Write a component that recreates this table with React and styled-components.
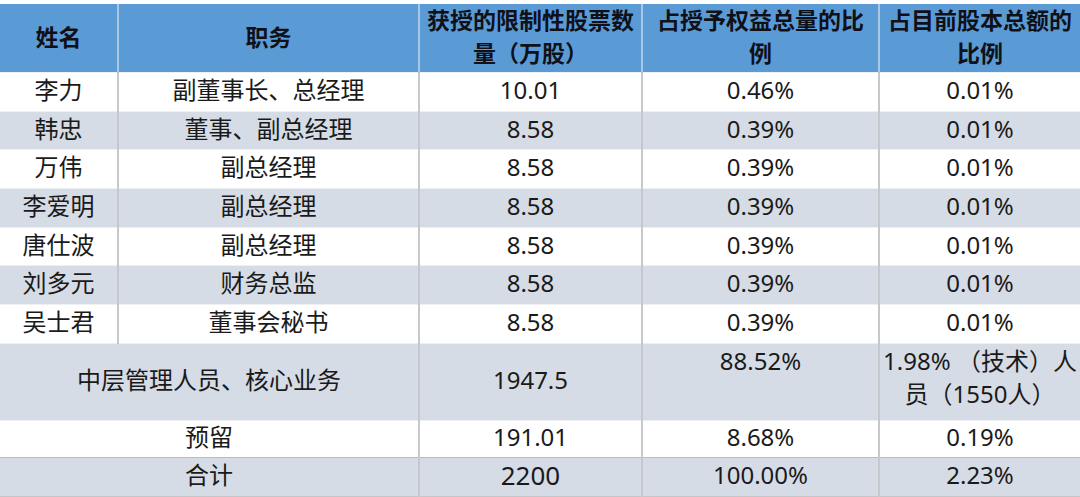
import React from "react";
import styled, { createGlobalStyle } from "styled-components";

const GlobalStyle = createGlobalStyle`
    body {
        margin: 0;
        padding-top: 4px;
        background: #fdfdfd;
        font-family: "Noto Sans", "Noto Sans CJK SC", sans-serif;
    }
`;

const Table = styled.table`
    width: 1080px;
    table-layout: fixed;
    border-collapse: collapse;
    color: #1a1a1a;
    font-size: 24px;
    text-align: center;
`;

const HeadCell = styled.th`
    height: 66px;
    padding: 0 0 2px;
    background: #5b9bd5;
    color: #101018;
    font-size: 23px;
    font-weight: 700;
    line-height: 33px;
    border-left: 2px solid #a9c6e4;
    &:first-child {
        border-left: none;
    }
`;

const Row = styled.tr`
    height: ${(p) => p.$h || 38.7}px;
    background: ${(p) => (p.$shade ? "#d6dce5" : "#ffffff")};
    border-top: 1px solid ${(p) => (p.$total ? "#b9bcc2" : "#eef0f3")};
    border-bottom: ${(p) => (p.$total ? "1px solid #c4c6ca" : "none")};
`;

const Cell = styled.td`
    padding: ${(p) => (p.$top ? "0" : "0 0 4px")};
    vertical-align: ${(p) => (p.$top ? "top" : "middle")};
    line-height: ${(p) => (p.$top ? "33px" : "30px")};
    font-size: ${(p) => (p.$big ? "26px" : "inherit")};
    border-left: 2px solid #c6c8cc;
    &:first-child {
        border-left: none;
    }
`;

const people = [
    ["李力", "副董事长、总经理", "10.01", "0.46%"],
    ["韩忠", "董事、副总经理", "8.58", "0.39%"],
    ["万伟", "副总经理", "8.58", "0.39%"],
    ["李爱明", "副总经理", "8.58", "0.39%"],
    ["唐仕波", "副总经理", "8.58", "0.39%"],
    ["刘多元", "财务总监", "8.58", "0.39%"],
    ["吴士君", "董事会秘书", "8.58", "0.39%"],
];

const App = () => {
    return (
        <>
            <GlobalStyle />
            <Table>
                <colgroup>
                    <col style={{ width: 118 }} />
                    <col style={{ width: 301 }} />
                    <col style={{ width: 223 }} />
                    <col style={{ width: 237 }} />
                    <col style={{ width: 201 }} />
                </colgroup>
                <thead>
                    <tr>
                        <HeadCell>姓名</HeadCell>
                        <HeadCell>职务</HeadCell>
                        <HeadCell>
                            获授的限制性股票数
                            <br />
                            量（万股）
                        </HeadCell>
                        <HeadCell>
                            占授予权益总量的比
                            <br />
                            例
                        </HeadCell>
                        <HeadCell>
                            占目前股本总额的
                            <br />
                            比例
                        </HeadCell>
                    </tr>
                </thead>
                <tbody>
                    {people.map(([name, title, shares, ratio], i) => (
                        <Row key={name} $shade={i % 2 === 1}>
                            <Cell>{name}</Cell>
                            <Cell>{title}</Cell>
                            <Cell>{shares}</Cell>
                            <Cell>{ratio}</Cell>
                            <Cell>0.01%</Cell>
                        </Row>
                    ))}
                    <Row $shade $h={77}>
                        <Cell colSpan={2}>中层管理人员、核心业务</Cell>
                        <Cell>1947.5</Cell>
                        <Cell $top>88.52%</Cell>
                        <Cell $top>
                            1.98% （技术）人
                            <br />
                            员（1550人）
                        </Cell>
                    </Row>
                    <Row $h={37}>
                        <Cell colSpan={2}>预留</Cell>
                        <Cell>191.01</Cell>
                        <Cell>8.68%</Cell>
                        <Cell>0.19%</Cell>
                    </Row>
                    <Row $shade $total $h={39}>
                        <Cell colSpan={2}>合计</Cell>
                        <Cell $big>2200</Cell>
                        <Cell>100.00%</Cell>
                        <Cell>2.23%</Cell>
                    </Row>
                </tbody>
            </Table>
        </>
    );
};

export default App;
